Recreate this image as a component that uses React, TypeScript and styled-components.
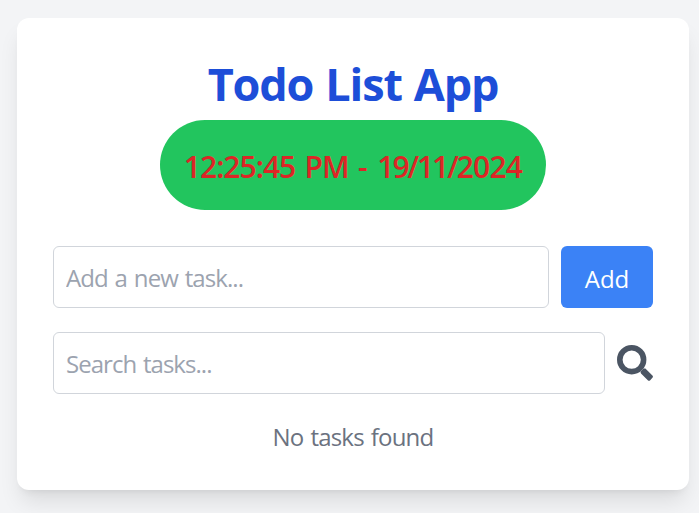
import React, { useState } from 'react';
import styled, { createGlobalStyle } from 'styled-components';

const GlobalStyle = createGlobalStyle`
  *, *::before, *::after { box-sizing: border-box; }
  body {
    margin: 0;
    background: #f3f4f6;
    font-family: 'Segoe UI', 'Open Sans', 'Noto Sans', sans-serif;
    font-size: 24px;
    line-height: 36px;
  }
`;

const Page = styled.main`
  min-height: 513px;
  height: 100vh;
  padding: 18px 10px 0 17px;
  overflow: hidden;
`;

const Card = styled.section`
  width: 672px;
  height: 472px;
  padding: 36px;
  display: flex;
  flex-direction: column;
  background: #fff;
  border-radius: 12px;
  box-shadow: 0 15px 22.5px -4.5px rgba(0, 0, 0, 0.1), 0 6px 9px -6px rgba(0, 0, 0, 0.1);

  & > * { flex-shrink: 0; }
`;

const Title = styled.h1`
  margin: 0 0 12px;
  padding-top: 3px;
  height: 54px;
  font-size: 45px;
  line-height: 54px;
  font-weight: 700;
  letter-spacing: -1.15px;
  word-spacing: 1.5px;
  text-align: center;
  color: #1d4ed8;
  white-space: nowrap;
`;

const Clock = styled.time`
  align-self: center;
  width: 386px;
  height: 90px;
  margin-bottom: 36px;
  padding: 3px 24px 0;
  display: flex;
  align-items: center;
  justify-content: center;
  border-radius: 45px;
  background: #22c55e;
  color: #dc2626;
  font-size: 30px;
  line-height: 42px;
  font-weight: 550;
  white-space: pre;
`;

const ClockPart = styled.span<{ $tracking: number; $gap?: number }>`
  letter-spacing: ${({ $tracking }) => $tracking}px;
  word-spacing: ${({ $gap = 0 }) => $gap}px;
`;

const Row = styled.div`
  display: flex;
  align-items: center;
  gap: 12px;
  margin-bottom: 24px;
`;

const Field = styled.input<{ $tracking: number }>`
  flex: 1;
  min-width: 0;
  height: 62px;
  padding: 12px;
  border: 1px solid #d1d5db;
  border-radius: 6px;
  background: #fff;
  color: #111827;
  font: inherit;
  letter-spacing: ${({ $tracking }) => $tracking}px;
  word-spacing: 1.5px;
  outline: none;
  &::placeholder { color: #9ca3af; opacity: 1; }
`;

const AddButton = styled.button`
  width: 92px;
  height: 62px;
  padding: 3px 0 0;
  border: 0;
  border-radius: 6px;
  background: #3b82f6;
  color: #fff;
  font: inherit;
  cursor: pointer;
`;

const SearchIcon = styled.svg`
  display: block;
  width: 36px;
  height: 36px;
  flex: none;
  color: #4b5563;
`;

const Empty = styled.p`
  margin: 0;
  padding-top: 1px;
  text-align: center;
  letter-spacing: -0.8px;
  word-spacing: 1.5px;
  color: #6b7280;
`;

export default function App() {
  const [task, setTask] = useState('');
  const [query, setQuery] = useState('');
  return (
    <>
      <GlobalStyle />
      <Page>
        <Card>
          <Title>Todo List App</Title>
          <Clock>
            <ClockPart $tracking={-1} $gap={2.5}>12:25:45 PM </ClockPart>
            <ClockPart $tracking={-1.5} $gap={5}>- </ClockPart>
            <ClockPart $tracking={-2.1}>19/11/</ClockPart>
            <ClockPart $tracking={-0.8}>2024</ClockPart>
          </Clock>
          <Row>
            <Field $tracking={-0.92} placeholder="Add a new task..." value={task} onChange={(e) => setTask(e.target.value)} />
            <AddButton type="button">Add</AddButton>
          </Row>
          <Row>
            <Field $tracking={-0.97} placeholder="Search tasks..." value={query} onChange={(e) => setQuery(e.target.value)} />
            <SearchIcon viewBox="0 0 36 36" fill="none" aria-hidden="true">
              <circle cx="14.7" cy="14.7" r="11.9" stroke="currentColor" strokeWidth="5.6" />
              <path d="M23.4 26.8 26.6 23.4 28.4 23.6 35.4 30.6Q36.5 31.8 35.4 32.8L33.2 35.2Q32 36.4 30.8 35.2L24 28.4Z" fill="currentColor" />
            </SearchIcon>
          </Row>
          <Empty>No tasks found</Empty>
        </Card>
      </Page>
    </>
  );
}
